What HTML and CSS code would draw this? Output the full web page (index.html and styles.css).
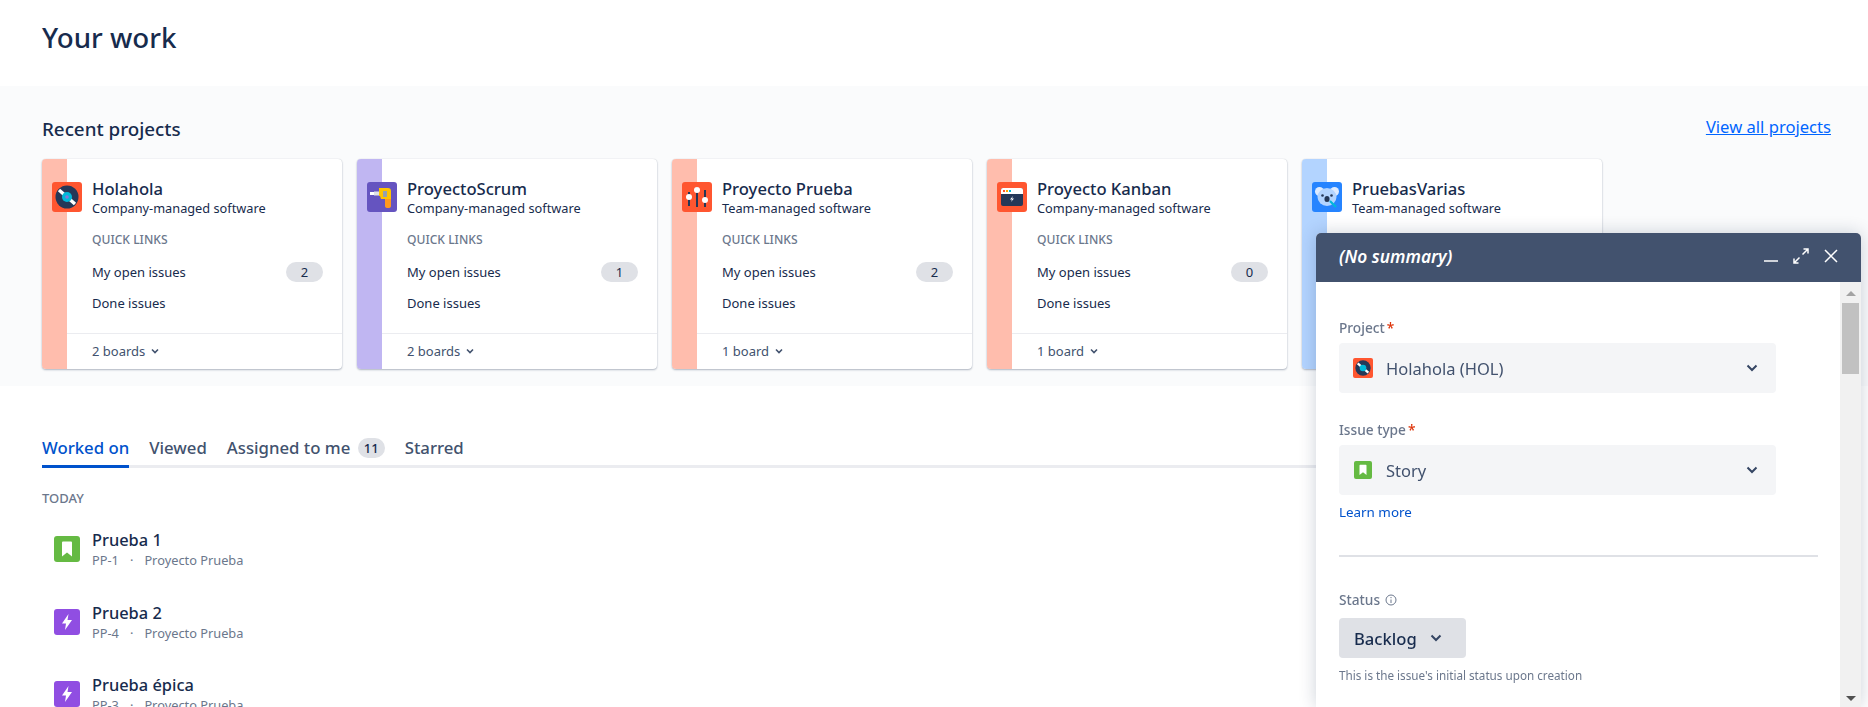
FILE: index.html
```html
<!DOCTYPE html>
<html lang="en">
<head>
  <meta charset="UTF-8" />
  <title>Your work</title>
  <link rel="stylesheet" href="styles.css">
</head>
<body>
  <header class="page-head">
    <h1>Your work</h1>
  </header>

  <section class="projects">
    <div class="projects-head">
      <h2>Recent projects</h2>
      <a href="#" class="view-all">View all projects</a>
    </div>
    <div class="card-row">

      <div class="card">
        <div class="stripe stripe-red"></div>
        <div class="card-main">
          <div class="card-body">
            <svg class="project-icon" viewBox="0 0 30 30"><rect width="30" height="30" rx="3" fill="#ff5630"/><circle cx="15" cy="15" r="11.5" fill="#253858"/><path d="M7 8l16 14" stroke="#fff" stroke-width="3.4"/><circle cx="15" cy="15" r="5" fill="#00b8d9"/><circle cx="15" cy="15" r="1.8" fill="#8777d9"/></svg>
            <div class="card-text">
              <div class="project-name">Holahola</div>
              <div class="project-type">Company-managed software</div>
              <div class="quick-title">QUICK LINKS</div>
              <div class="quick-row"><span>My open issues</span><span class="count">2</span></div>
              <div class="quick-row"><span>Done issues</span></div>
            </div>
          </div>
          <div class="card-foot">2 boards <svg class="chev-small" viewBox="0 0 8 6"><path d="M1 1.5l3 3 3-3" /></svg></div>
        </div>
      </div>

      <div class="card">
        <div class="stripe stripe-purple"></div>
        <div class="card-main">
          <div class="card-body">
            <svg class="project-icon" viewBox="0 0 30 30"><rect width="30" height="30" rx="3" fill="#6554c0"/><path d="M3 10h4v3H3z" fill="#fff"/><path d="M7 9.500h5v4H7z" fill="#dfe1e6"/><path d="M18 15h6v9q0 2-3 2t-3-2z" fill="#ff991f"/><path d="M12 6h9q3 0 3 3v8H14l-1-3h-1z" fill="#ffc400"/><path d="M16 9h4v6h-4z" fill="#97a0af"/></svg>
            <div class="card-text">
              <div class="project-name">ProyectoScrum</div>
              <div class="project-type">Company-managed software</div>
              <div class="quick-title">QUICK LINKS</div>
              <div class="quick-row"><span>My open issues</span><span class="count">1</span></div>
              <div class="quick-row"><span>Done issues</span></div>
            </div>
          </div>
          <div class="card-foot">2 boards <svg class="chev-small" viewBox="0 0 8 6"><path d="M1 1.5l3 3 3-3" /></svg></div>
        </div>
      </div>

      <div class="card">
        <div class="stripe stripe-red"></div>
        <div class="card-main">
          <div class="card-body">
            <svg class="project-icon" viewBox="0 0 30 30"><rect width="30" height="30" rx="3" fill="#ff5630"/><path d="M7 10v14M15 5v20M23 8v17" stroke="#253858" stroke-width="2"/><circle cx="7" cy="15" r="3" fill="#fff"/><circle cx="15" cy="8" r="3" fill="#fff"/><circle cx="23" cy="18" r="3" fill="#fff"/></svg>
            <div class="card-text">
              <div class="project-name">Proyecto Prueba</div>
              <div class="project-type">Team-managed software</div>
              <div class="quick-title">QUICK LINKS</div>
              <div class="quick-row"><span>My open issues</span><span class="count">2</span></div>
              <div class="quick-row"><span>Done issues</span></div>
            </div>
          </div>
          <div class="card-foot">1 board <svg class="chev-small" viewBox="0 0 8 6"><path d="M1 1.5l3 3 3-3" /></svg></div>
        </div>
      </div>

      <div class="card">
        <div class="stripe stripe-red"></div>
        <div class="card-main">
          <div class="card-body">
            <svg class="project-icon" viewBox="0 0 30 30"><rect width="30" height="30" rx="3" fill="#ff5630"/><rect x="4" y="6" width="22" height="18" rx="2" fill="#253858"/><path d="M4 8q0-2 2-2h18q2 0 2 2v4H4z" fill="#fff"/><path d="M6 8h2v2H6z" fill="#ff5630"/><path d="M9 8h2v2H9z" fill="#ffab00"/><path d="M12 8h2v2h-2z" fill="#00b8d9"/><path d="M16 14l-3 3.500h2l-1 2.500 3-3.500h-2z" fill="#fff"/></svg>
            <div class="card-text">
              <div class="project-name">Proyecto Kanban</div>
              <div class="project-type">Company-managed software</div>
              <div class="quick-title">QUICK LINKS</div>
              <div class="quick-row"><span>My open issues</span><span class="count">0</span></div>
              <div class="quick-row"><span>Done issues</span></div>
            </div>
          </div>
          <div class="card-foot">1 board <svg class="chev-small" viewBox="0 0 8 6"><path d="M1 1.5l3 3 3-3" /></svg></div>
        </div>
      </div>

      <div class="card">
        <div class="stripe stripe-blue"></div>
        <div class="card-main">
          <div class="card-body">
            <svg class="project-icon" viewBox="0 0 30 30"><rect width="30" height="30" rx="3" fill="#2684ff"/><circle cx="7.500" cy="9.500" r="4.500" fill="#deebff"/><circle cx="22.500" cy="9.500" r="4.500" fill="#deebff"/><ellipse cx="15" cy="15" rx="9.500" ry="9" fill="#b3d4ff"/><circle cx="10.500" cy="13.500" r="1.300" fill="#253858"/><circle cx="19.500" cy="13.500" r="1.300" fill="#253858"/><rect x="12.500" y="14" width="5" height="6" rx="2.500" fill="#253858"/><path d="M18 19l6 6" stroke="#00b8d9" stroke-width="2.200"/></svg>
            <div class="card-text">
              <div class="project-name">PruebasVarias</div>
              <div class="project-type">Team-managed software</div>
              <div class="quick-title">QUICK LINKS</div>
              <div class="quick-row"><span>My open issues</span><span class="count">0</span></div>
              <div class="quick-row"><span>Done issues</span></div>
            </div>
          </div>
          <div class="card-foot">1 board <svg class="chev-small" viewBox="0 0 8 6"><path d="M1 1.5l3 3 3-3" /></svg></div>
        </div>
      </div>

    </div>
  </section>

  <section class="work">
    <div class="tabs">
      <div class="tab tab-active">Worked on</div>
      <div class="tab">Viewed</div>
      <div class="tab">Assigned to me <span class="tab-count">11</span></div>
      <div class="tab">Starred</div>
    </div>
    <div class="day-title">TODAY</div>

    <div class="issue">
      <svg class="issue-icon" viewBox="0 0 26 26"><rect width="26" height="26" rx="3" fill="#65ba43"/><path d="M8 6.500q0-1 1-1h8q1 0 1 1v14l-5-4-5 4z" fill="#fff"/></svg>
      <div>
        <div class="issue-name">Prueba 1</div>
        <div class="issue-meta">PP-1<span class="dot">·</span>Proyecto Prueba</div>
      </div>
    </div>
    <div class="issue">
      <svg class="issue-icon" viewBox="0 0 26 26"><rect width="26" height="26" rx="3" fill="#904ee2"/><path d="M14.500 5L8 14.500h4l-1 6.500 7-10h-4.500z" fill="#fff"/></svg>
      <div>
        <div class="issue-name">Prueba 2</div>
        <div class="issue-meta">PP-4<span class="dot">·</span>Proyecto Prueba</div>
      </div>
    </div>
    <div class="issue">
      <svg class="issue-icon" viewBox="0 0 26 26"><rect width="26" height="26" rx="3" fill="#904ee2"/><path d="M14.500 5L8 14.500h4l-1 6.500 7-10h-4.500z" fill="#fff"/></svg>
      <div>
        <div class="issue-name">Prueba épica</div>
        <div class="issue-meta">PP-3<span class="dot">·</span>Proyecto Prueba</div>
      </div>
    </div>
  </section>

  <!-- Create issue dialog, docked bottom right -->
  <div class="dialog">
    <div class="dialog-head">
      <span class="dialog-title">(No summary)</span>
      <div class="dialog-actions">
        <svg viewBox="0 0 16 16"><path d="M1 13h14" /></svg>
        <svg viewBox="0 0 16 16"><path d="M9.500 6.500L15 1M10.500 1H15v4.500M6.500 9.500L1 15M1 10.500V15h4.500" /></svg>
        <svg viewBox="0 0 16 16"><path d="M2 2l12 12M14 2L2 14" /></svg>
      </div>
    </div>
    <div class="dialog-main">
      <div class="dialog-form">
        <div class="field-label">Project<span class="req">*</span></div>
        <div class="select">
          <svg class="select-icon" viewBox="0 0 30 30"><rect width="30" height="30" rx="3" fill="#ff5630"/><circle cx="15" cy="15" r="11.500" fill="#253858"/><path d="M7 8l16 14" stroke="#fff" stroke-width="3.400"/><circle cx="15" cy="15" r="5" fill="#00b8d9"/></svg>
          <span class="select-text">Holahola (HOL)</span>
          <svg class="chev" viewBox="0 0 12 8"><path d="M1.500 1.500L6 6l4.500-4.500" /></svg>
        </div>
        <div class="field-label label-next">Issue type<span class="req">*</span></div>
        <div class="select">
          <svg class="select-icon story" viewBox="0 0 18 18"><rect width="18" height="18" rx="2" fill="#65ba43"/><path d="M5.500 4.500q0-.7.700-.7h5.600q.7 0 .7.700v9.500L9 11.200 5.500 14z" fill="#fff"/></svg>
          <span class="select-text">Story</span>
          <svg class="chev" viewBox="0 0 12 8"><path d="M1.500 1.500L6 6l4.500-4.500" /></svg>
        </div>
        <a href="#" class="learn-more">Learn more</a>
        <hr class="form-line">
        <div class="field-label label-status">Status
          <svg class="info" viewBox="0 0 12 12"><circle cx="6" cy="6" r="5"/><path d="M6 5.500V9M6 3v1.200" /></svg>
        </div>
        <div class="status-btn">Backlog
          <svg class="chev" viewBox="0 0 12 8"><path d="M1.500 1.500L6 6l4.500-4.500" /></svg>
        </div>
        <div class="helper">This is the issue's initial status upon creation</div>
      </div>
      <div class="scrollbar">
        <div class="arrow-up"></div>
        <div class="thumb"></div>
        <div class="arrow-down"></div>
      </div>
    </div>
  </div>
</body>
</html>
```

FILE: styles.css
```css
* {
  box-sizing: border-box;
}
html {
  overflow: hidden;
}
body {
  display: flex;
  flex-direction: column;
  height: 100vh;
  margin: 0;
  overflow: hidden;
  background: #fff;
  color: #172b4d;
  font-family: "Noto Sans", "Open Sans", sans-serif;
  font-size: 14px;
}
a {
  text-decoration: none;
}

.page-head {
  flex: 0 0 86px;
  padding: 17px 42px 0;
}
h1 {
  margin: 0;
  font-size: 27.7px;
  font-weight: 500;
  line-height: 40px;
}

/* Recent projects band */
.projects {
  flex: 0 0 300px;
  padding: 0 37px 0 42px;
  background: #fafbfc;
}
.projects-head {
  display: flex;
  justify-content: space-between;
  align-items: flex-start;
  padding: 28px 0 16px;
}
h2 {
  margin: 2px 0 0;
  font-size: 18.8px;
  font-weight: 500;
  line-height: 27px;
}
.view-all {
  color: #0065ff;
  font-size: 16.6px;
  line-height: 26px;
  text-decoration: underline;
}
.card-row {
  display: flex;
  gap: 15px;
}
.card {
  display: flex;
  width: 300px;
  height: 210px;
  overflow: hidden;
  background: #fff;
  border-radius: 4px;
  box-shadow: 0 1px 2px rgba(9, 30, 66, 0.3), 0 0 1px rgba(9, 30, 66, 0.2);
}
.stripe {
  flex: 0 0 25px;
}
.stripe-red { background: #ffbdad; }
.stripe-purple { background: #c0b6f2; }
.stripe-blue { background: #b3d4ff; }
.card-main {
  flex: 1;
  display: flex;
  flex-direction: column;
}
.card-body {
  flex: 1;
  display: flex;
  padding: 20px 19px 0 0;
}
.project-icon {
  flex: 0 0 30px;
  width: 30px;
  height: 30px;
  margin: 3px 10px 0 -15px;
}
.card-text {
  flex: 1;
}
.project-name {
  font-size: 16.6px;
  font-weight: 500;
  line-height: 20px;
}
.project-type {
  font-size: 12.75px;
  line-height: 18px;
}
.quick-title {
  margin-top: 14px;
  color: #6b778c;
  font-size: 12.1px;
  font-weight: 500;
  line-height: 18px;
}
.quick-row {
  display: flex;
  justify-content: space-between;
  align-items: center;
  height: 31px;
  font-size: 13px;
}
.quick-title + .quick-row {
  margin-top: 7px;
}
.count {
  width: 37px;
  height: 20px;
  border-radius: 10px;
  background: #dfe1e6;
  font-size: 13px;
  line-height: 20px;
  text-align: center;
}
.card-foot {
  display: flex;
  align-items: center;
  gap: 6px;
  height: 36px;
  padding: 0 0 2px 25px;
  border-top: 1px solid #ebecf0;
  color: #42526e;
  font-size: 13px;
}
.chev-small {
  width: 8px;
  height: 6px;
  fill: none;
  stroke: #42526e;
  stroke-width: 1.6;
}

/* Tabs and issue list */
.work {
  flex: 1;
  min-height: 0;
  overflow: hidden;
  padding: 47px 42px 0;
}
.tabs {
  display: flex;
  gap: 20px;
  border-bottom: 3px solid #ebecf0;
}
.tab {
  height: 35px;
  margin-bottom: -3px;
  border-bottom: 3px solid transparent;
  color: #42526e;
  font-size: 16.75px;
  font-weight: 500;
  line-height: 30px;
}
.tab-active {
  border-bottom-color: #0052cc;
  color: #0052cc;
}
.tab-count {
  display: inline-block;
  width: 27px;
  height: 20px;
  margin-left: 3px;
  border-radius: 10px;
  background: #dfe1e6;
  color: #172b4d;
  font-size: 13px;
  line-height: 20px;
  text-align: center;
  vertical-align: 1px;
}
.day-title {
  margin-top: 21px;
  color: #6b778c;
  font-size: 13px;
  font-weight: 500;
  line-height: 18px;
}
.issue {
  display: flex;
  gap: 12px;
  height: 40px;
  margin: 23px 0 32.5px;
  padding-left: 12px;
}
.issue + .issue {
  margin-top: 0;
}
.issue-icon {
  flex: 0 0 26px;
  width: 26px;
  height: 26px;
  margin-top: 6px;
}
.issue-name {
  font-size: 16.4px;
  font-weight: 500;
  line-height: 20px;
}
.issue-meta {
  color: #6b778c;
  font-size: 12.8px;
  line-height: 20px;
}
.dot {
  margin: 0 11px;
}

/* Dialog */
.dialog {
  position: fixed;
  top: 233px;
  right: 7px;
  bottom: 0;
  width: 545px;
  display: flex;
  flex-direction: column;
  background: #fff;
  border-radius: 5px 5px 0 0;
  box-shadow: 0 0 18px rgba(9, 30, 66, 0.2);
}
.dialog-head {
  display: flex;
  justify-content: space-between;
  align-items: center;
  flex: 0 0 49px;
  padding: 0 23px 2px;
  border-radius: 5px 5px 0 0;
  background: #42526e;
  color: #fff;
}
.dialog-title {
  font-size: 17.3px;
  font-style: italic;
  font-weight: 600;
}
.dialog-actions {
  display: flex;
  gap: 14px;
  margin: -1px -1px 0 0;
}
.dialog-actions svg {
  width: 16px;
  height: 16px;
  fill: none;
  stroke: #fff;
  stroke-width: 1.5;
}
.dialog-main {
  flex: 1;
  display: flex;
  min-height: 0;
}
.dialog-form {
  flex: 1;
  padding: 36px 0 0 23px;
}
.field-label {
  color: #6b778c;
  font-size: 13.7px;
  font-weight: 500;
  line-height: 20px;
}
.label-next {
  margin-top: 27px;
}
.req {
  margin-left: 2px;
  color: #de350b;
}
.select {
  display: flex;
  align-items: center;
  width: 437px;
  height: 50px;
  margin-top: 5px;
  padding: 0 18px 0 14px;
  border-radius: 4px;
  background: #f4f5f7;
  color: #42526e;
}
.select-icon {
  width: 20px;
  height: 20px;
  margin-right: 13px;
}
.select-icon.story {
  width: 18px;
  height: 18px;
  margin: 0 14px 0 1px;
}
.select-text {
  flex: 1;
  font-size: 16.5px;
}
.chev {
  width: 12px;
  height: 8px;
  fill: none;
  stroke: #344563;
  stroke-width: 2;
}
.learn-more {
  display: block;
  margin-top: 7px;
  color: #0052cc;
  font-size: 13.4px;
  line-height: 20px;
}
.form-line {
  width: 479px;
  height: 2px;
  margin: 33px 0 0;
  border: 0;
  background: #dfe1e6;
}
.label-status {
  display: flex;
  align-items: center;
  gap: 5px;
  margin-top: 33px;
}
.info {
  width: 12px;
  height: 12px;
  fill: none;
  stroke: #6b778c;
  stroke-width: 1;
}
.status-btn {
  display: flex;
  justify-content: space-between;
  align-items: center;
  width: 127px;
  height: 40px;
  margin-top: 8px;
  padding: 0 24px 0 15px;
  border-radius: 4px;
  background: #dfe1e6;
  font-size: 16.6px;
  font-weight: 500;
}
.helper {
  margin-top: 8px;
  color: #6b778c;
  font-size: 11.7px;
  line-height: 18px;
}

/* Browser style scrollbar drawn by hand */
.scrollbar {
  display: flex;
  flex-direction: column;
  align-items: center;
  flex: 0 0 21px;
  padding: 9px 2px 6px;
  background: #f1f1f1;
}
.arrow-up, .arrow-down {
  width: 0;
  height: 0;
  border-left: 5px solid transparent;
  border-right: 5px solid transparent;
}
.arrow-up {
  border-bottom: 5px solid #a3a3a3;
}
.arrow-down {
  border-top: 5px solid #505050;
}
.thumb {
  width: 17px;
  height: 71px;
  margin: 7px 0 auto;
  background: #c1c1c1;
}
```
